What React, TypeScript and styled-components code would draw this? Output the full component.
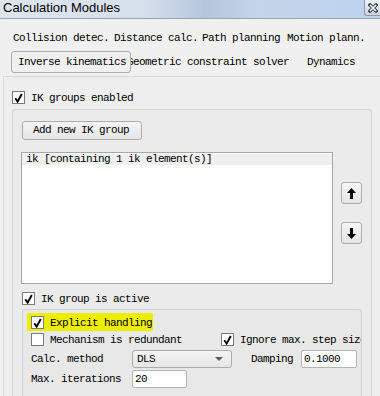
import styled, { createGlobalStyle } from "styled-components";

const GlobalStyle = createGlobalStyle`
  html, body {
    margin: 0;
    padding: 0;
    background: #f0f0f0;
    overflow: hidden;
  }
`;

const mono = `"Liberation Mono", "DejaVu Sans Mono", monospace`;

const Window = styled.div`
  width: 380px;
  height: 396px;
  overflow: hidden;
  background: #f0f0f0;
  font-family: ${mono};
  font-size: 11px;
  letter-spacing: -0.6px;
  color: #000;
  display: flex;
  flex-direction: column;
`;

const TitleBar = styled.div`
  height: 19px;
  box-sizing: border-box;
  flex-shrink: 0;
  border-bottom: 1px solid #9aa4b0;
  background: linear-gradient(
    90deg,
    #dde6f0 0%,
    #d6e0ec 38%,
    #b5c6dc 54%,
    #c4d5ea 68%,
    #bdd2ee 100%
  );
  display: flex;
  align-items: center;
  justify-content: space-between;
`;

const TitleText = styled.div`
  font-family: "Liberation Sans", Arial, sans-serif;
  font-size: 13px;
  letter-spacing: 0;
  line-height: 16px;
  padding: 0 0 2px 3px;
  color: #000;
`;

const CloseButton = styled.div`
  width: 16px;
  height: 16px;
  margin-bottom: 2px;
  box-sizing: border-box;
  border-left: 1px solid #8f98a4;
  border-bottom: 1px solid #8f98a4;
  border-bottom-left-radius: 3px;
  background: linear-gradient(#eef2f7, #c9d3de);
  display: flex;
  align-items: center;
  justify-content: center;
`;

const TabRow = styled.div<{ $top: number; $left: number; $h: number }>`
  display: flex;
  margin-top: ${(p) => p.$top}px;
  padding-left: ${(p) => p.$left}px;
  height: ${(p) => p.$h}px;
  white-space: nowrap;
`;

const Tab = styled.div<{ $w: number; $shift?: number; $selected?: boolean }>`
  flex-shrink: 0;
  width: ${(p) => p.$w}px;
  margin-left: ${(p) => p.$shift ?? 0}px;
  padding-left: 6px;
  box-sizing: border-box;
  line-height: ${(p) => (p.$selected ? "20px" : "22px")};
  ${(p) =>
    p.$selected &&
    `
    position: relative;
    z-index: 1;
    border: 1px solid #adadad;
    border-radius: 3px;
    background: #f0f0f0;
  `}
`;

const Pane = styled.div`
  margin-top: 3px;
  margin-left: 3px;
  width: 400px;
  flex: 1;
  border-top: 1px solid #d9d9d9;
  border-left: 1px solid #dcdcdc;
  background: #eeeeee;
  padding: 14px 0 0 8px;
  box-sizing: border-box;
`;

const CheckRow = styled.div<{ $left?: number }>`
  display: flex;
  align-items: center;
  height: 13px;
  margin-left: ${(p) => p.$left ?? 0}px;
  white-space: nowrap;
`;

const Box = styled.div`
  width: 13px;
  height: 13px;
  flex-shrink: 0;
  box-sizing: border-box;
  border: 1px solid #7a7a7a;
  background: #fff;
  margin-right: 6px;
  display: flex;
  align-items: center;
  justify-content: center;
`;

const Check = ({ checked }: { checked?: boolean }) => (
  <Box>
    {checked && (
      <svg width="9" height="10" viewBox="0 0 9 10">
        <path
          d="M1.3 5.2 L3.6 8.6 L7.8 1"
          stroke="#000"
          strokeWidth="1.9"
          fill="none"
        />
      </svg>
    )}
  </Box>
);

const GroupBox = styled.div`
  margin-top: 5px;
  width: 360px;
  height: 400px;
  box-sizing: border-box;
  border: 1px solid #d5d5d5;
  border-radius: 3px;
  background: #ebebeb;
  padding: 11px 0 0 8px;
`;

const PushButton = styled.div<{ $w: number }>`
  width: ${(p) => p.$w}px;
  height: 19px;
  margin-left: 1px;
  box-sizing: border-box;
  border: 1px solid #acacac;
  border-radius: 3px;
  background: linear-gradient(#f4f4f4, #e6e6e6);
  padding-left: 10px;
  line-height: 17px;
  white-space: nowrap;
`;

const ListRow = styled.div`
  display: flex;
  margin-top: 12px;
  gap: 8px;
`;

const ListBox = styled.div`
  width: 312px;
  height: 132px;
  box-sizing: border-box;
  border: 1px solid #a7a7a7;
  background: #fff;
  padding-top: 1px;
`;

const ListItem = styled.div<{ $active?: boolean }>`
  height: 11px;
  line-height: 11px;
  padding-left: 4px;
  background: ${(p) => (p.$active ? "#efefef" : "transparent")};
  white-space: nowrap;
`;

const ArrowColumn = styled.div`
  display: flex;
  flex-direction: column;
  padding-top: 30px;
  gap: 18px;
`;

const ArrowButton = styled.div`
  width: 21px;
  height: 22px;
  box-sizing: border-box;
  border: 1px solid #acacac;
  border-radius: 3px;
  background: linear-gradient(#f6f6f6, #e4e4e4);
  display: flex;
  align-items: center;
  justify-content: center;
`;

const Arrow = ({ down }: { down?: boolean }) => (
  <svg
    width="9"
    height="11"
    viewBox="0 0 9 11"
    style={down ? { transform: "rotate(180deg)" } : undefined}
  >
    <polygon points="0,5 4.5,0 9,5" fill="#000" />
    <rect x="3" y="4" width="3" height="7" fill="#000" />
  </svg>
);

const ActiveRow = styled(CheckRow)`
  margin-top: 8px;
`;

const InnerGroup = styled.div`
  margin-top: 4px;
  margin-left: 1px;
  width: 340px;
  height: 200px;
  box-sizing: border-box;
  border: 1px solid #d2d2d2;
  border-radius: 3px;
  background: #e8e8e8;
  padding: 3px 0 0 4px;
  overflow: hidden;
`;

const Highlight = styled.div`
  width: 126px;
  height: 18px;
  box-sizing: border-box;
  background: #eded00;
  padding: 3px 0 0 4px;
`;

const OptionRow = styled.div`
  display: flex;
  margin-top: 2px;
  padding-left: 4px;
  white-space: nowrap;
`;

const FieldRow = styled.div<{ $top: number }>`
  display: flex;
  align-items: center;
  margin-top: ${(p) => p.$top}px;
  padding-left: 4px;
  white-space: nowrap;
`;

const FieldLabel = styled.div<{ $w: number }>`
  width: ${(p) => p.$w}px;
  flex-shrink: 0;
`;

const Combo = styled.div`
  width: 100px;
  height: 18px;
  box-sizing: border-box;
  border: 1px solid #acacac;
  border-radius: 3px;
  background: linear-gradient(#f4f4f4, #e6e6e6);
  padding: 0 8px 0 4px;
  display: flex;
  align-items: center;
  justify-content: space-between;
`;

const ComboArrow = styled.div`
  width: 0;
  height: 0;
  border-left: 4px solid transparent;
  border-right: 4px solid transparent;
  border-top: 4px solid #5c5c5c;
`;

const LineEdit = styled.div<{ $w: number }>`
  width: ${(p) => p.$w}px;
  height: 18px;
  box-sizing: border-box;
  border: 1px solid #b4b4b4;
  border-radius: 2px;
  background: #fff;
  padding-left: 2px;
  line-height: 16px;
`;

export default function App() {
  return (
    <Window>
      <GlobalStyle />
      <TitleBar>
        <TitleText>Calculation Modules</TitleText>
        <CloseButton>
          <svg width="10" height="10" viewBox="0 0 10 10">
            <path
              d="M2 2 L8 8 M8 2 L2 8"
              stroke="#3a4450"
              strokeWidth="3.4"
              strokeLinecap="square"
            />
            <path d="M2 2 L8 8 M8 2 L2 8" stroke="#fff" strokeWidth="1.6" />
          </svg>
        </CloseButton>
      </TitleBar>

      <TabRow $top={8} $left={7} $h={20}>
        <Tab $w={101}>Collision detec.</Tab>
        <Tab $w={88}>Distance calc.</Tab>
        <Tab $w={85}>Path planning</Tab>
        <Tab $w={90}>Motion plann.</Tab>
      </TabRow>
      <TabRow $top={4} $left={11} $h={22}>
        <Tab $w={120} $selected>
          Inverse kinematics
        </Tab>
        <Tab $w={180} $shift={-10}>
          Geometric constraint solver
        </Tab>
        <Tab $w={60}>Dynamics</Tab>
      </TabRow>

      <Pane>
        <CheckRow>
          <Check checked />
          IK groups enabled
        </CheckRow>
        <GroupBox>
          <PushButton $w={120}>Add new IK group</PushButton>
          <ListRow>
            <ListBox>
              <ListItem $active>ik [containing 1 ik element(s)]</ListItem>
            </ListBox>
            <ArrowColumn>
              <ArrowButton>
                <Arrow />
              </ArrowButton>
              <ArrowButton>
                <Arrow down />
              </ArrowButton>
            </ArrowColumn>
          </ListRow>
          <ActiveRow $left={1}>
            <Check checked />
            IK group is active
          </ActiveRow>
          <InnerGroup>
            <Highlight>
              <CheckRow>
                <Check checked />
                Explicit handling
              </CheckRow>
            </Highlight>
            <OptionRow>
              <FieldLabel $w={190}>
                <CheckRow>
                  <Check />
                  Mechanism is redundant
                </CheckRow>
              </FieldLabel>
              <CheckRow>
                <Check checked />
                Ignore max. step size
              </CheckRow>
            </OptionRow>
            <FieldRow $top={4}>
              <FieldLabel $w={101}>Calc. method</FieldLabel>
              <Combo>
                DLS
                <ComboArrow />
              </Combo>
              <FieldLabel $w={50} style={{ marginLeft: 19 }}>
                Damping
              </FieldLabel>
              <LineEdit $w={56}>0.1000</LineEdit>
            </FieldRow>
            <FieldRow $top={2}>
              <FieldLabel $w={101}>Max. iterations</FieldLabel>
              <LineEdit $w={55}>20</LineEdit>
            </FieldRow>
          </InnerGroup>
        </GroupBox>
      </Pane>
    </Window>
  );
}
